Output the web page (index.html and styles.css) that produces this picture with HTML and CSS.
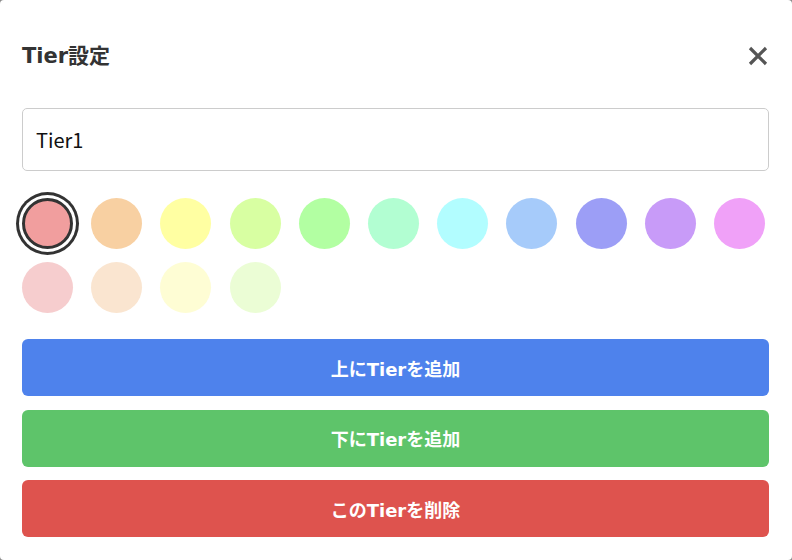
FILE: index.html
```
<!DOCTYPE html>
<html lang="ja">
<head>
<meta charset="utf-8">
<link rel="stylesheet" href="styles.css">
</head>
<body>
<div class="modal">
  <div class="header">
    <h2 class="title">Tier設定</h2>
    <button class="close" aria-label="閉じる">
      <svg width="20" height="20" viewBox="0 0 20 20"><path d="M2 2 L18 18 M18 2 L2 18" stroke="#555" stroke-width="3.2" stroke-linecap="butt" fill="none"/></svg>
    </button>
  </div>
  <input class="name" type="text" value="Tier1">
  <div class="swatches">
    <span class="swatch selected" style="background:#f19e9e"></span>
    <span class="swatch" style="background:#f8d0a2"></span>
    <span class="swatch" style="background:#ffffa2"></span>
    <span class="swatch" style="background:#d8ffa2"></span>
    <span class="swatch" style="background:#b2ffa2"></span>
    <span class="swatch" style="background:#b2fed2"></span>
    <span class="swatch" style="background:#b2fdff"></span>
    <span class="swatch" style="background:#a6cbfa"></span>
    <span class="swatch" style="background:#9c9ef6"></span>
    <span class="swatch" style="background:#c89bf8"></span>
    <span class="swatch" style="background:#f0a1f8"></span>
    <span class="swatch" style="background:#f6cdce"></span>
    <span class="swatch" style="background:#fae5d0"></span>
    <span class="swatch" style="background:#fefdd4"></span>
    <span class="swatch" style="background:#ebfdd5"></span>
  </div>
  <div class="actions">
    <button class="btn blue">上にTierを追加</button>
    <button class="btn green">下にTierを追加</button>
    <button class="btn red">このTierを削除</button>
  </div>
</div>
</body>
</html>
```
FILE: styles.css
```
html, body {
  margin: 0;
  padding: 0;
  background: #8a8a8a;
  font-family: "Noto Sans CJK JP", "Noto Sans", sans-serif;
}
.modal {
  box-sizing: border-box;
  width: 792px;
  height: 560px;
  background: #fff;
  border-radius: 4px;
  padding: 36px 23px 0 22px;
  overflow: hidden;
}
.header {
  display: flex;
  align-items: center;
  justify-content: space-between;
  height: 36px;
}
.title {
  margin: 0;
  font-family: "DejaVu Sans", "Noto Sans CJK JP", sans-serif;
  font-size: 21px;
  font-weight: 700;
  color: #333;
}
.close {
  border: 0;
  background: none;
  padding: 0;
  margin: 4px 1px 0 0;
  width: 20px;
  height: 20px;
  display: flex;
}
.name {
  display: block;
  box-sizing: border-box;
  width: 100%;
  height: 63px;
  margin-top: 36px;
  border: 1px solid #cccccc;
  border-radius: 5px;
  padding: 0 13px;
  font-family: "Noto Sans CJK JP", "Noto Sans", sans-serif;
  font-size: 20px;
  color: #111;
  outline: none;
}
.swatches {
  display: flex;
  flex-wrap: wrap;
  column-gap: 18.2px;
  row-gap: 13px;
  margin-top: 27px;
}
.swatch {
  box-sizing: border-box;
  width: 51px;
  height: 51px;
  border-radius: 50%;
}
.swatch.selected {
  border: 3px solid #333;
  box-shadow: 0 0 0 3px #fff, 0 0 0 6px #333;
}
.actions {
  display: flex;
  flex-direction: column;
  gap: 13.5px;
  margin-top: 26px;
}
.btn {
  height: 57px;
  border: 0;
  border-radius: 6px;
  color: #fff;
  font-family: "DejaVu Sans", "Noto Sans CJK JP", sans-serif;
  font-size: 18px;
  font-weight: 700;
}
.blue { background: #4e82ec; }
.green { background: #5ec46a; }
.red { background: #de534e; }
```
